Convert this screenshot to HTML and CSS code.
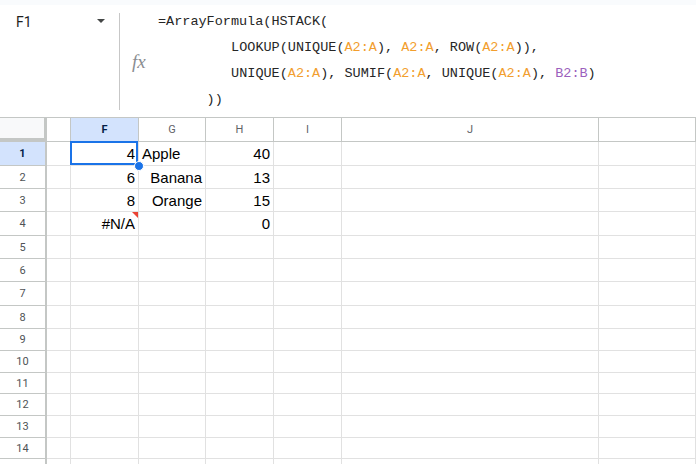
FILE: index.html
```html
<!DOCTYPE html>
<html>
<head>
<meta charset="utf-8">
<link rel="stylesheet" href="styles.css">
</head>
<body>
<div class="strip"></div>
<div class="fbar">
  <div class="namebox"><span class="ref">F1</span><span class="caret"></span></div>
  <div class="sep"></div>
  <div class="fx">fx</div>
  <div class="formula">
    <div class="line">=ArrayFormula(HSTACK(</div>
    <div class="line ind9">LOOKUP(UNIQUE(<span class="o">A2:A</span>), <span class="o">A2:A</span>, ROW(<span class="o">A2:A</span>)),</div>
    <div class="line ind9">UNIQUE(<span class="o">A2:A</span>), SUMIF(<span class="o">A2:A</span>, UNIQUE(<span class="o">A2:A</span>), <span class="p">B2:B</span>)</div>
    <div class="line ind6">))</div>
  </div>
</div>
<div class="sheet">
  <div class="row head">
    <div class="corner"></div><div class="ch"></div><div class="ch sel">F</div><div class="ch">G</div><div class="ch">H</div><div class="ch">I</div><div class="ch">J</div><div class="ch"></div>
  </div>
  <div class="row h24">
    <div class="rh sel">1</div><div class="c"></div><div class="c num active">4<span class="handle"></span></div><div class="c">Apple</div><div class="c num">40</div><div class="c"></div><div class="c"></div><div class="c"></div>
  </div>
  <div class="row h23">
    <div class="rh">2</div><div class="c"></div><div class="c num">6</div><div class="c num">Banana</div><div class="c num">13</div><div class="c"></div><div class="c"></div><div class="c"></div>
  </div>
  <div class="row h23">
    <div class="rh">3</div><div class="c"></div><div class="c num">8</div><div class="c num">Orange</div><div class="c num">15</div><div class="c"></div><div class="c"></div><div class="c"></div>
  </div>
  <div class="row h24">
    <div class="rh">4</div><div class="c"></div><div class="c num err">#N/A<span class="flag"></span></div><div class="c"></div><div class="c num">0</div><div class="c"></div><div class="c"></div><div class="c"></div>
  </div>
  <div class="row h23">
    <div class="rh">5</div><div class="c"></div><div class="c"></div><div class="c"></div><div class="c"></div><div class="c"></div><div class="c"></div><div class="c"></div>
  </div>
  <div class="row h23">
    <div class="rh">6</div><div class="c"></div><div class="c"></div><div class="c"></div><div class="c"></div><div class="c"></div><div class="c"></div><div class="c"></div>
  </div>
  <div class="row h24">
    <div class="rh">7</div><div class="c"></div><div class="c"></div><div class="c"></div><div class="c"></div><div class="c"></div><div class="c"></div><div class="c"></div>
  </div>
  <div class="row h23">
    <div class="rh">8</div><div class="c"></div><div class="c"></div><div class="c"></div><div class="c"></div><div class="c"></div><div class="c"></div><div class="c"></div>
  </div>
  <div class="row h22">
    <div class="rh">9</div><div class="c"></div><div class="c"></div><div class="c"></div><div class="c"></div><div class="c"></div><div class="c"></div><div class="c"></div>
  </div>
  <div class="row h22">
    <div class="rh">10</div><div class="c"></div><div class="c"></div><div class="c"></div><div class="c"></div><div class="c"></div><div class="c"></div><div class="c"></div>
  </div>
  <div class="row h21">
    <div class="rh">11</div><div class="c"></div><div class="c"></div><div class="c"></div><div class="c"></div><div class="c"></div><div class="c"></div><div class="c"></div>
  </div>
  <div class="row h22">
    <div class="rh">12</div><div class="c"></div><div class="c"></div><div class="c"></div><div class="c"></div><div class="c"></div><div class="c"></div><div class="c"></div>
  </div>
  <div class="row h22">
    <div class="rh">13</div><div class="c"></div><div class="c"></div><div class="c"></div><div class="c"></div><div class="c"></div><div class="c"></div><div class="c"></div>
  </div>
  <div class="row h21">
    <div class="rh">14</div><div class="c"></div><div class="c"></div><div class="c"></div><div class="c"></div><div class="c"></div><div class="c"></div><div class="c"></div>
  </div>
  <div class="row h21">
    <div class="rh"></div><div class="c"></div><div class="c"></div><div class="c"></div><div class="c"></div><div class="c"></div><div class="c"></div><div class="c"></div>
  </div>
</div>
</body>
</html>
```
FILE: styles.css
```css
* { box-sizing: border-box; }
html, body { margin: 0; padding: 0; }
body {
  width: 696px;
  height: 464px;
  overflow: hidden;
  background: #ffffff;
  font-family: "Liberation Sans", Arial, sans-serif;
  color: #1f1f1f;
}
.strip { height: 5px; background: #f9fbfd; }
.fbar { display: flex; height: 112px; background: #fff; }
.namebox {
  width: 119px;
  display: flex;
  align-items: flex-start;
  padding: 9px 0 0 16px;
}
.ref {
  font-family: Roboto, "Liberation Sans", sans-serif;
  font-size: 14px;
  line-height: 16px;
  color: #1f1f1f;
  width: 81px;
}
.caret {
  margin-top: 5px;
  width: 0; height: 0;
  border-left: 4px solid transparent;
  border-right: 4px solid transparent;
  border-top: 4px solid #444746;
}
.sep { width: 1px; background: #c7c7c7; margin: 8px 0 7px; }
.fx {
  width: 38px;
  padding-left: 12px;
  align-self: center;
  font-family: "Liberation Serif", serif;
  font-style: italic;
  font-size: 19px;
  color: #8a8d91;
  margin-top: 2px;
}
.formula {
  padding-top: 3.5px;
  font-family: "Liberation Mono", monospace;
  font-size: 13.5px;
  color: #262626;
}
.line { height: 26.3px; line-height: 26.3px; white-space: pre; }
.ind9 { padding-left: 73.1px; }
.ind6 { padding-left: 48.6px; }
.o { color: #f29e2e; }
.p { color: #9c5fbd; }

.sheet { display: flex; flex-direction: column; }
.row {
  display: grid;
  grid-template-columns: 47px 24px 68px 67px 68px 68px 257px 1fr;
  flex: none;
}
.head { height: 25px; }
.h24 { height: 24px; }
.h23 { height: 23px; }
.h22 { height: 22px; }
.h21 { height: 21px; }

.corner {
  background: #f8f9fa;
  border-top: 1px solid #c4c7c5;
  border-bottom: 1px solid #c4c7c5;
  box-shadow: inset -3px -3px 0 #c4c7c5;
}
.ch {
  border-top: 1px solid #c4c7c5;
  border-bottom: 1px solid #c4c7c5;
  border-right: 1px solid #c4c7c5;
  display: flex;
  align-items: center;
  justify-content: center;
  font-family: Roboto, "Liberation Sans", sans-serif;
  font-size: 11px;
  color: #5f6368;
}
.rh {
  border-right: 2px solid #c4c7c5;
  border-bottom: 1px solid #c4c7c5;
  display: flex;
  align-items: center;
  justify-content: center;
  font-family: Roboto, "Liberation Sans", sans-serif;
  font-size: 11px;
  color: #4f5356;
}
.sel {
  background: #d3e3fd;
  color: #041e49;
  font-weight: bold;
}
.c {
  border-right: 1px solid #e1e1e1;
  border-bottom: 1px solid #e1e1e1;
  display: flex;
  align-items: center;
  padding: 0 3px;
  font-size: 15px;
  color: #000;
  white-space: nowrap;
  position: relative;
}
.num { justify-content: flex-end; }
.active::after {
  content: "";
  position: absolute;
  top: -1px; left: -1px; right: 0; bottom: 0;
  border: 2px solid #1a73e8;
}
.handle {
  position: absolute;
  right: -6px;
  bottom: -6px;
  width: 10px;
  height: 10px;
  border-radius: 50%;
  background: #1a73e8;
  border: 1px solid #fff;
  z-index: 2;
}
.flag {
  position: absolute;
  top: 0;
  right: 0;
  width: 0; height: 0;
  border-top: 6px solid #ea4335;
  border-left: 6px solid transparent;
}
```
